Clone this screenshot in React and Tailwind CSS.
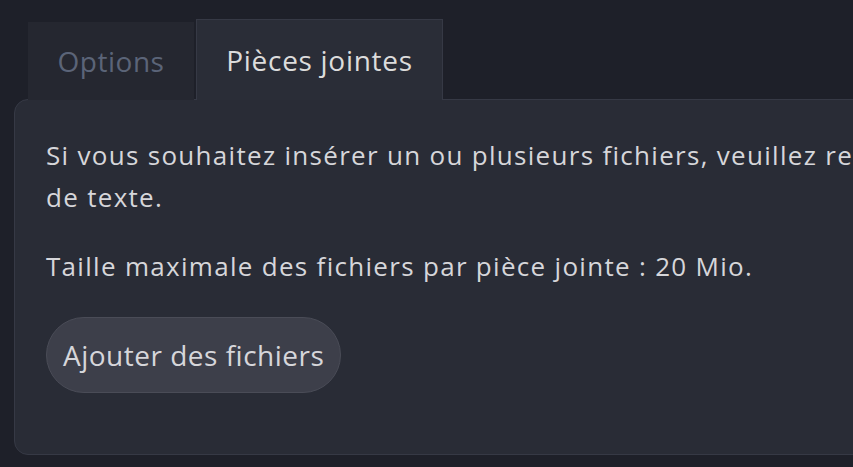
import React from 'react';

const Tabs = () => {
  return (
    <div className="flex pl-[14px] items-end">
      <button className="w-[166px] h-[78px] bg-[#252730] text-[#5b6478] text-[28px] tracking-[0.5px]">
        Options
      </button>
      <button className="ml-[2px] w-[247px] h-[81px] bg-[#2a2d37] border border-[#363945] border-b-0 text-[#dcdcdc] text-[28px] tracking-[0.7px] relative z-10">
        Pièces jointes
      </button>
    </div>
  );
};

const App = () => {
  return (
    <div
      className="w-[853px] h-[467px] overflow-hidden bg-[#1e2029] pt-[19px] pl-[14px]"
      style={{ fontFamily: '"Open Sans", sans-serif' }}
    >
      <Tabs />
      <div className="w-[900px] h-[356px] -mt-px bg-[#292c36] border border-[#363945] rounded-l-[14px] pt-[34px] pl-[31px] text-[#d6d6da] text-[26px] leading-[42px] tracking-[1.3px]">
        <p className="whitespace-nowrap">
          Si vous souhaitez insérer un ou plusieurs fichiers, veuillez renseigner le champ
          <br />
          de texte.
        </p>
        <p className="mt-[27px]">Taille maximale des fichiers par pièce jointe : 20 Mio.</p>
        <button className="mt-[30px] h-[76px] px-[16px] rounded-full bg-[#3d3f4a] border border-[#4a4c57] text-[#d6d6da] text-[28px] tracking-[0.5px]">
          Ajouter des fichiers
        </button>
      </div>
    </div>
  );
};

export default App;
